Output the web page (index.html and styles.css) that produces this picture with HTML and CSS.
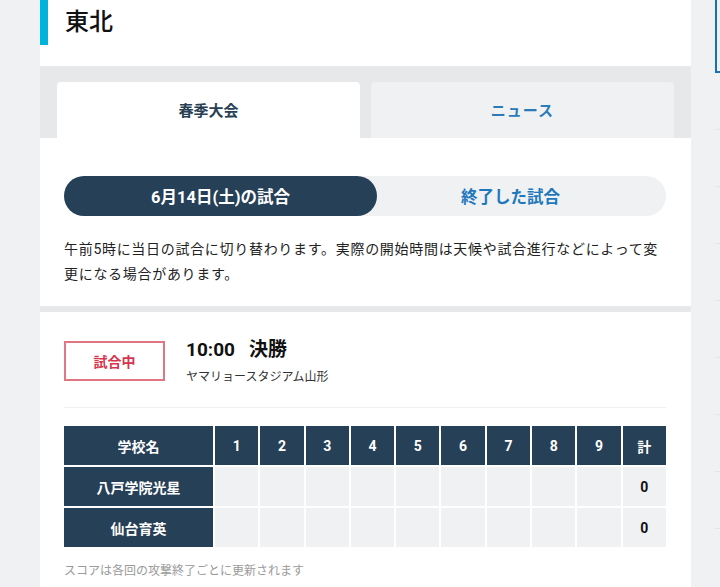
FILE: index.html
```html
<!DOCTYPE html>
<html lang="ja">
<head>
<meta charset="utf-8">
<link rel="stylesheet" href="styles.css">
</head>
<body>
<div class="page">
  <main class="main">
    <header class="region-head">
      <h1 class="region-title">東北</h1>
    </header>
    <nav class="tabs">
      <div class="tab tab-active">春季大会</div>
      <div class="tab tab-other">ニュース</div>
    </nav>
    <section class="day-section">
      <div class="pill">
        <div class="pill-item pill-active">6月14日(土)の試合</div>
        <div class="pill-item pill-other">終了した試合</div>
      </div>
      <p class="notice">午前5時に当日の試合に切り替わります。実際の開始時間は天候や試合進行などによって変更になる場合があります。</p>
    </section>
    <section class="game">
      <div class="game-head">
        <div class="badge">試合中</div>
        <div class="game-info">
          <div class="game-title">10:00&nbsp;&nbsp;&nbsp;決勝</div>
          <div class="game-venue">ヤマリョースタジアム山形</div>
        </div>
      </div>
      <div class="score">
        <div class="cell head name">学校名</div>
        <div class="cell head">1</div>
        <div class="cell head">2</div>
        <div class="cell head">3</div>
        <div class="cell head">4</div>
        <div class="cell head">5</div>
        <div class="cell head">6</div>
        <div class="cell head">7</div>
        <div class="cell head">8</div>
        <div class="cell head">9</div>
        <div class="cell head">計</div>

        <div class="cell head name">八戸学院光星</div>
        <div class="cell"></div><div class="cell"></div><div class="cell"></div>
        <div class="cell"></div><div class="cell"></div><div class="cell"></div>
        <div class="cell"></div><div class="cell"></div><div class="cell"></div>
        <div class="cell total">0</div>

        <div class="cell head name">仙台育英</div>
        <div class="cell"></div><div class="cell"></div><div class="cell"></div>
        <div class="cell"></div><div class="cell"></div><div class="cell"></div>
        <div class="cell"></div><div class="cell"></div><div class="cell"></div>
        <div class="cell total">0</div>
      </div>
      <p class="score-note">スコアは各回の攻撃終了ごとに更新されます</p>
    </section>
  </main>
  <aside class="side">
    <div class="side-box"></div>
    <ul class="side-list">
      <li></li><li></li><li></li><li></li><li></li><li></li><li></li><li></li>
    </ul>
  </aside>
</div>
</body>
</html>
```

FILE: styles.css
```css
* { box-sizing: border-box; }
html, body { margin: 0; padding: 0; }
body {
  background: #eff1f3;
  font-family: Roboto, "Noto Sans CJK JP", sans-serif;
  color: #222;
  width: 720px;
  height: 587px;
  overflow: hidden;
}
.page {
  display: flex;
  align-items: flex-start;
  padding-left: 40px;
}
.main {
  width: 651px;
  background: #fff;
  flex: none;
}
.region-head {
  height: 66px;
}
.region-title {
  margin: 0;
  height: 45px;
  border-left: 8px solid #00b3dc;
  padding-left: 17px;
  font-size: 24px;
  font-weight: 500;
  line-height: 44px;
  color: #111;
}
.tabs {
  background: #e6e8ea;
  padding: 16px 17px 0 17px;
  display: flex;
  gap: 11px;
}
.tab {
  flex: 1;
  height: 56px;
  border-radius: 4px 4px 0 0;
  display: flex;
  align-items: center;
  justify-content: center;
  font-size: 15px;
  font-weight: 700;
  padding-bottom: 2px;
}
.tab-active { background: #fff; color: #283f54; }
.tab-other { background: #eff1f3; color: #2b7bb9; letter-spacing: 1px; }
.day-section {
  padding: 38px 25px 19px 24px;
  border-bottom: 6px solid #e6e8ea;
}
.pill {
  display: flex;
  height: 40px;
  background: #eff1f3;
  border-radius: 20px;
}
.pill-item {
  display: flex;
  align-items: center;
  justify-content: center;
  font-size: 16.5px;
  font-weight: 700;
}
.pill-active {
  width: 313px;
  background: #264057;
  color: #fff;
  border-radius: 20px;
  position: relative;
  z-index: 1;
}
.pill-other {
  flex: 1;
  margin-left: -22px;
  color: #1f78bb;
}
.notice {
  margin: 21px 0 0 0;
  font-size: 14px;
  line-height: 25px;
  letter-spacing: 0.7px;
  color: #222;
}
.game {
  padding: 29px 25px 8px 24px;
}
.game-head {
  display: flex;
  gap: 21px;
  padding-bottom: 22px;
  border-bottom: 1px solid #eeeff1;
}
.badge {
  width: 101px;
  height: 40px;
  border: 2px solid #e27483;
  color: #d6354c;
  font-size: 14px;
  font-weight: 700;
  display: flex;
  align-items: center;
  justify-content: center;
}
.game-info {
  display: flex;
  flex-direction: column;
}
.game-title {
  font-size: 19px;
  font-weight: 700;
  line-height: 20px;
  color: #111;
  margin-top: -1px;
}
.game-venue {
  font-size: 12px;
  line-height: 16px;
  margin-top: 9px;
  color: #333;
}
.score {
  margin-top: 18px;
  display: grid;
  grid-template-columns: 149px repeat(10, 1fr);
  grid-auto-rows: 39px;
  gap: 2px;
}
.cell {
  background: #eff1f3;
  display: flex;
  align-items: center;
  justify-content: center;
  font-size: 14px;
  font-weight: 700;
}
.cell.head {
  background: #264057;
  color: #fff;
}
.cell.total { color: #111; }
.score-note {
  margin: 16px 0 0 0;
  font-size: 12px;
  line-height: 16px;
  color: #9a9a9a;
}
.side {
  flex: 1;
  padding-left: 24px;
}
.side-box {
  height: 73px;
  border: 2px solid #1a6fb1;
  border-top: none;
  border-right: none;
}
.side-list {
  list-style: none;
  margin: 0;
  padding: 0;
}
.side-list li {
  height: 57px;
  border-bottom: 1px solid #e3e5e8;
}
```
